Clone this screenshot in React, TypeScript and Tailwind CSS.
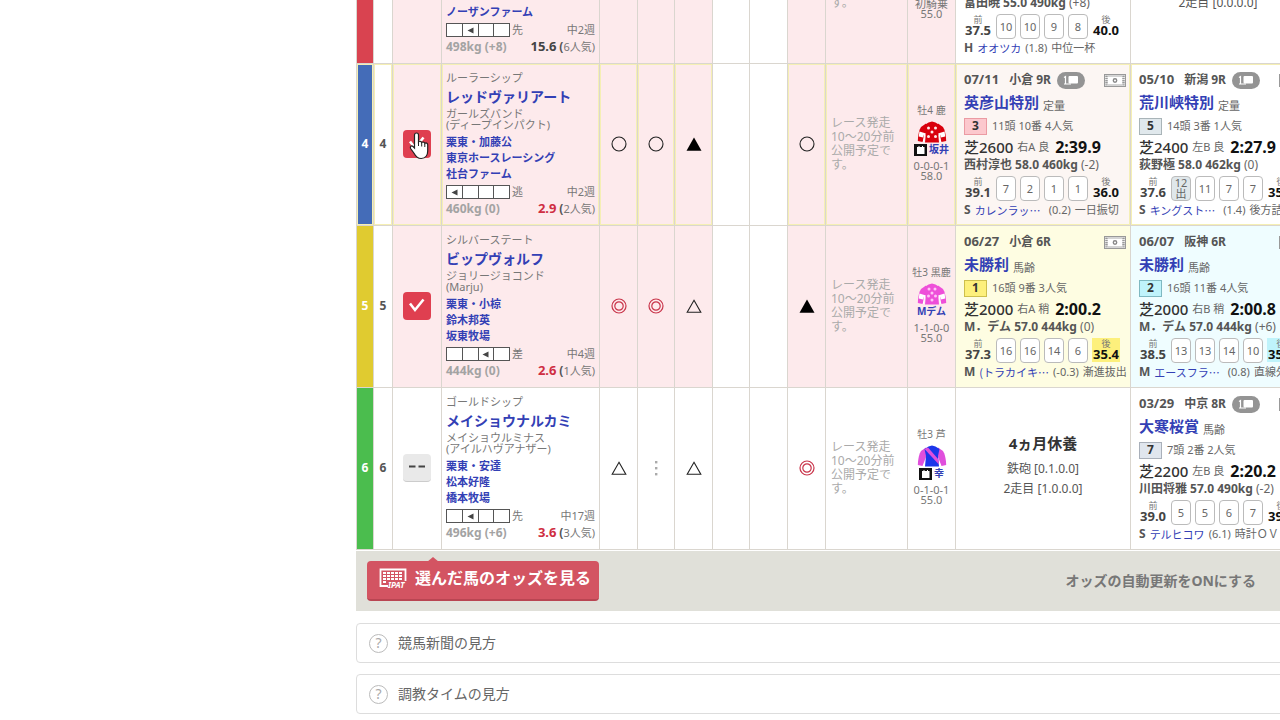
import { ReactNode, useState } from 'react';
import clsx from 'clsx';

type Mark = 'circle' | 'double' | 'solid' | 'triangle' | 'dots' | null;

interface Race {
  kind: 'race';
  bg: string;
  date?: string;
  place?: string;
  video?: boolean;
  title?: string;
  rule?: string;
  rank?: string;
  rankStyle?: string;
  field?: string;
  distance?: string;
  track?: string;
  time?: string;
  jockey: string;
  diff: string;
  front: string;
  corners: string[];
  last: string;
  lastBg?: string;
  pace: string;
  rival: string;
  margin: string;
  note: string;
}

interface Rest {
  kind: 'rest';
  title?: string;
  lines: string[];
}

interface Horse {
  no: number;
  frame: string;
  picked: boolean;
  hover?: boolean;
  sire?: string;
  name?: string;
  dam?: string;
  damSire?: string;
  people: string[];
  style: number;
  styleName: string;
  interval: string;
  weight: string;
  odds: string;
  hot?: boolean;
  rank: string;
  marks: Mark[];
  sex?: string;
  silk: 'star' | 'dots' | 'sash';
  stable?: boolean;
  rider?: string;
  record: string;
  load: string;
  races: (Race | Rest)[];
}

const horses: Horse[] = [
  {
    no: 3,
    frame: 'bg-[#d94350]',
    picked: true,
    people: ['ノーザンファーム'],
    style: 1,
    styleName: '先',
    interval: '中2週',
    weight: '498kg (+8)',
    odds: '15.6',
    rank: '6人気',
    marks: [null, null, null, null, null, null],
    silk: 'star',
    record: '初騎乗',
    load: '55.0',
    races: [
      {
        kind: 'race',
        bg: 'bg-white',
        jockey: '富田暁 55.0 490kg',
        diff: '(+8)',
        front: '37.5',
        corners: ['10', '10', '9', '8'],
        last: '40.0',
        pace: 'H',
        rival: 'オオツカ',
        margin: '(1.8)',
        note: '中位一杯',
      },
      { kind: 'rest', lines: ['', '2走目 [0.0.0.0]'] },
    ],
  },
  {
    no: 4,
    frame: 'bg-[#446cb8]',
    picked: true,
    hover: true,
    sire: 'ルーラーシップ',
    name: 'レッドヴァリアート',
    dam: 'ガールズバンド',
    damSire: '(ディープインパクト)',
    people: ['栗東・加藤公', '東京ホースレーシング', '社台ファーム'],
    style: 0,
    styleName: '逃',
    interval: '中2週',
    weight: '460kg (0)',
    odds: '2.9',
    hot: true,
    rank: '2人気',
    marks: ['circle', 'circle', 'solid', null, null, 'circle'],
    sex: '牡4 鹿',
    silk: 'star',
    stable: true,
    rider: '坂井',
    record: '0-0-0-1',
    load: '58.0',
    races: [
      {
        kind: 'race',
        bg: 'bg-[#fcf6f3]',
        date: '07/11',
        place: '小倉 9R',
        video: true,
        title: '英彦山特別',
        rule: '定量',
        rank: '3',
        rankStyle: 'bg-[#fcc8cd] border-[#eb9ba3]',
        field: '11頭 10番 4人気',
        distance: '芝2600',
        track: '右A 良',
        time: '2:39.9',
        jockey: '西村淳也 58.0 460kg',
        diff: '(-2)',
        front: '39.1',
        corners: ['7', '2', '1', '1'],
        last: '36.0',
        pace: 'S',
        rival: 'カレンラッ…',
        margin: '(0.2)',
        note: '一日振切',
      },
      {
        kind: 'race',
        bg: 'bg-white',
        date: '05/10',
        place: '新潟 9R',
        video: true,
        title: '荒川峡特別',
        rule: '定量',
        rank: '5',
        rankStyle: 'bg-[#e0e8ec] border-[#a9b4b8]',
        field: '14頭 3番 1人気',
        distance: '芝2400',
        track: '左B 良',
        time: '2:27.9',
        jockey: '荻野極 58.0 462kg',
        diff: '(0)',
        front: '37.6',
        corners: ['12出', '11', '7', '7'],
        last: '35.5',
        pace: 'S',
        rival: 'キングスト…',
        margin: '(1.4)',
        note: '後方詰',
      },
    ],
  },
  {
    no: 5,
    frame: 'bg-[#e0cb30]',
    picked: true,
    sire: 'シルバーステート',
    name: 'ビップヴォルフ',
    dam: 'ジョリージョコンド',
    damSire: '(Marju)',
    people: ['栗東・小椋', '鈴木邦英', '坂東牧場'],
    style: 2,
    styleName: '差',
    interval: '中4週',
    weight: '444kg (0)',
    odds: '2.6',
    hot: true,
    rank: '1人気',
    marks: ['double', 'double', 'triangle', null, null, 'solid'],
    sex: '牡3 黒鹿',
    silk: 'dots',
    rider: 'Mデム',
    record: '1-1-0-0',
    load: '55.0',
    races: [
      {
        kind: 'race',
        bg: 'bg-[#fefde2]',
        date: '06/27',
        place: '小倉 6R',
        title: '未勝利',
        rule: '馬齢',
        rank: '1',
        rankStyle: 'bg-[#fdf07c] border-[#cdbf4d]',
        field: '16頭 9番 3人気',
        distance: '芝2000',
        track: '右A 稍',
        time: '2:00.2',
        jockey: 'M．デム 57.0 444kg',
        diff: '(0)',
        front: '37.3',
        corners: ['16', '16', '14', '6'],
        last: '35.4',
        lastBg: 'bg-[#fdf07c]',
        pace: 'M',
        rival: '(トラカイキ…',
        margin: '(-0.3)',
        note: '漸進抜出',
      },
      {
        kind: 'race',
        bg: 'bg-[#effdff]',
        date: '06/07',
        place: '阪神 6R',
        title: '未勝利',
        rule: '馬齢',
        rank: '2',
        rankStyle: 'bg-[#bff3fb] border-[#7fb9c2]',
        field: '16頭 11番 4人気',
        distance: '芝2000',
        track: '右B 稍',
        time: '2:00.8',
        jockey: 'M．デム 57.0 444kg',
        diff: '(+6)',
        front: '38.5',
        corners: ['13', '13', '14', '10'],
        last: '35.2',
        lastBg: 'bg-[#bff3fb]',
        pace: 'M',
        rival: 'エースフラ…',
        margin: '(0.8)',
        note: '直線外',
      },
    ],
  },
  {
    no: 6,
    frame: 'bg-[#4bbd4e]',
    picked: false,
    sire: 'ゴールドシップ',
    name: 'メイショウナルカミ',
    dam: 'メイショウルミナス',
    damSire: '(アイルハヴアナザー)',
    people: ['栗東・安達', '松本好隆', '橋本牧場'],
    style: 1,
    styleName: '先',
    interval: '中17週',
    weight: '496kg (+6)',
    odds: '3.6',
    hot: true,
    rank: '3人気',
    marks: ['triangle', 'dots', 'triangle', null, null, 'double'],
    sex: '牡3 芦',
    silk: 'sash',
    stable: true,
    rider: '幸',
    record: '0-1-0-1',
    load: '55.0',
    races: [
      { kind: 'rest', title: '4ヵ月休養', lines: ['鉄砲 [0.1.0.0]', '2走目 [1.0.0.0]'] },
      {
        kind: 'race',
        bg: 'bg-white',
        date: '03/29',
        place: '中京 8R',
        video: true,
        title: '大寒桜賞',
        rule: '馬齢',
        rank: '7',
        rankStyle: 'bg-[#e0e6ee] border-[#a9b0ba]',
        field: '7頭 2番 2人気',
        distance: '芝2200',
        track: '左B 良',
        time: '2:20.2',
        jockey: '川田将雅 57.0 490kg',
        diff: '(-2)',
        front: '39.0',
        corners: ['5', '5', '6', '7'],
        last: '39.5',
        pace: 'S',
        rival: 'テルヒコワ',
        margin: '(6.1)',
        note: '時計ＯＶ',
      },
    ],
  },
];

function MarkIcon({ mark }: { mark: Mark }) {
  if (!mark) return null;
  return (
    <svg viewBox="0 0 18 18" className="mx-auto block size-[18px]" fill="none">
      {mark === 'circle' && <circle cx="9" cy="9" r="7" stroke="#222" strokeWidth="1.1" />}
      {mark === 'double' && (
        <g stroke="#c9344a" strokeWidth="1.2">
          <circle cx="9" cy="9" r="7" />
          <circle cx="9" cy="9" r="4.2" />
        </g>
      )}
      {mark === 'solid' && <path d="M9 2.5 16.5 15.7H1.5Z" fill="#000" />}
      {mark === 'triangle' && <path d="M9 3.3 15.8 15.2H2.2Z" stroke="#222" strokeWidth="1.1" />}
      {mark === 'dots' && (
        <g fill="#aaa">
          <rect x="8" y="2" width="2.4" height="2.4" />
          <rect x="8" y="8" width="2.4" height="2.4" />
          <rect x="8" y="14" width="2.4" height="2.4" />
        </g>
      )}
    </svg>
  );
}

function Silk({ type }: { type: Horse['silk'] }) {
  const body = { star: '#d9000d', dots: '#ee4fd9', sash: '#1c36ea' }[type];
  const sleeve = { star: '#d9000d', dots: '#ee4fd9', sash: '#e04fdc' }[type];
  return (
    <svg viewBox="0 0 30 22" className="mx-auto block h-[22px] w-[30px]">
      <path d="M9 2.5 4 6C2 9 1 14 .8 20L5.5 21 9 12Z" fill={sleeve} />
      <path d="m21 2.5 5 3.5c2 3 3 8 3.2 14L24.5 21 21 12Z" fill={sleeve} />
      <path d="M11.5 1.5 15 .5l3.5 1 4 2.5-1.5 7 1 10.5H8L9 11 7.5 4Z" fill={body} />
      {type !== 'sash' && (
        <>
          <path d="m2.4 10.5 5 1.5-1.3 4.5-4.3-1Zm25.2 0-5 1.5 1.3 4.5 4.3-1Z" fill="#fff" />
          <path d="m7.8 12-1.3 9M22.2 12l1.3 9" stroke="#fff" strokeWidth="1.3" />
        </>
      )}
      {type === 'star' && (
        <g fill="#ffe9e9">
          <circle cx="11.5" cy="7" r="1.5" />
          <circle cx="18.5" cy="7" r="1.5" />
          <circle cx="15" cy="11" r="1.5" />
          <circle cx="11.5" cy="15.5" r="1.5" />
          <circle cx="18.5" cy="15.5" r="1.5" />
        </g>
      )}
      {type === 'dots' && (
        <g fill="#ffc4f5">
          <circle cx="12" cy="6" r="1.5" />
          <circle cx="18" cy="6" r="1.5" />
          <circle cx="15" cy="10" r="1.5" />
          <circle cx="11.5" cy="13" r="1.5" />
          <circle cx="18.5" cy="13" r="1.5" />
          <circle cx="15" cy="17" r="1.5" />
        </g>
      )}
      {type === 'sash' && <path d="M7.5 4 11 2.5l10.5 12 .4 5Z" fill="#e04fdc" />}
    </svg>
  );
}

function StableIcon() {
  return (
    <svg viewBox="0 0 13 12" className="block h-3 w-[13px]">
      <rect width="13" height="12" fill="#111" />
      <path d="M3 3h1.5V2h1v1H8V2h1v1h1.5v7H3Z" fill="#fff" />
    </svg>
  );
}

function VideoBadge() {
  return (
    <svg viewBox="0 0 28 17" className="block h-[17px] w-7">
      <rect width="28" height="17" rx="8.5" fill="#949494" />
      <rect x="11.5" y="4" width="9.5" height="7.5" rx="1" fill="#fff" />
      <path d="M7 5.500 8.500 4.500v7.500M7 12h7" stroke="#fff" strokeWidth="1.2" fill="none" />
    </svg>
  );
}

function FilmIcon() {
  return (
    <svg viewBox="0 0 22 13" className="block h-[13px] w-[22px]" fill="none">
      <rect x=".5" y=".5" width="21" height="12" fill="#fff" stroke="#999" />
      <path d="M2.5 1.5v10M19.5 1.5v10" stroke="#999" strokeWidth="2.5" strokeDasharray="1.5 .7" />
      <path d="M4 2h14M4 11h14" stroke="#aaa" />
      <circle cx="11" cy="6.5" r="1.7" stroke="#888" strokeWidth="1.4" />
    </svg>
  );
}

function HandCursor() {
  return (
    <svg viewBox="0 0 20 28" className="pointer-events-none absolute top-0.5 left-4 z-10 h-7 w-5">
      <path
        d="M5.5 16V3a2 2 0 0 1 4 0v7a1.8 1.8 0 0 1 3.2.6 1.8 1.8 0 0 1 3.1.9 1.7 1.7 0 0 1 2.9 1.3V19c0 4-2 7.5-6.5 7.5-4 0-5.5-2-7-5L1.6 16.500c-.9-2 1-3.300 2.400-2Z"
        fill="#fff"
        stroke="#222"
        strokeWidth="1.2"
      />
      <path d="M9.5 10v4M12.7 11v3.5M15.8 12v3" stroke="#222" strokeWidth="1" />
    </svg>
  );
}

function PickButton({ horse }: { horse: Horse }) {
  const [picked, setPicked] = useState(horse.picked);
  return (
    <div className="relative flex justify-center">
      <button
        type="button"
        aria-label={`${horse.no}`}
        aria-pressed={picked}
        onClick={() => setPicked(!picked)}
        className={clsx(
          'flex size-7 items-center justify-center rounded-sm',
          picked ? 'bg-[#df3f50]' : 'border-b border-[#ccc] bg-[#e9e9e9]'
        )}
      >
        <svg viewBox="0 0 28 28" className="size-7" fill="none">
          {picked ? (
            <path d="m7 11.5 5 6.5L20.5 7.5" stroke="#fff" strokeWidth="2.6" />
          ) : (
            <path d="M6 13.5h6.5M15.5 13.5H22" stroke="#444" strokeWidth="2" />
          )}
        </svg>
      </button>
      {horse.hover && <HandCursor />}
    </div>
  );
}

function HorseInfo({ horse }: { horse: Horse }) {
  return (
    <div className="px-1 text-[11px] leading-4 whitespace-nowrap text-[#777]">
      <div>{horse.sire}</div>
      {horse.name && (
        <a href="#" className="block text-sm leading-[22px] font-bold text-[#3340b5]">
          {horse.name}
        </a>
      )}
      <div className="leading-[11px]">{horse.dam}</div>
      <div className="mb-1 leading-[11px]">{horse.damSire}</div>
      {horse.people.map((p) => (
        <a key={p} href="#" className="block font-bold text-[#3340b5]">
          {p}
        </a>
      ))}
      <div className="mt-0.5 flex items-center">
        <span className="flex h-3.5 w-16 border border-[#555] bg-white">
          {[0, 1, 2, 3].map((i) => (
            <span
              key={i}
              className={clsx('flex flex-1 items-center justify-center', i > 0 && 'border-l border-[#555]')}
            >
              {i === horse.style && (
                <svg viewBox="0 0 7 7" className="size-[7px]">
                  <path d="M6.5.5v6l-6-3Z" fill="#444" />
                </svg>
              )}
            </span>
          ))}
        </span>
        <span className="ml-0.5">{horse.styleName}</span>
        <span className="ml-auto">{horse.interval}</span>
      </div>
      <div className="flex items-center justify-between">
        <b className="text-xs leading-4 text-[#a3a3a3]">{horse.weight}</b>
        <span>
          <b className={clsx('text-[13px]', horse.hot ? 'text-[#cf2e42]' : 'text-[#444]')}>{horse.odds}</b>{' '}
          <b className="text-xs text-[#555]">(</b>
          {horse.rank})
        </span>
      </div>
    </div>
  );
}

function Time({ label, value, className }: { label: string; value: string; className?: string }) {
  return (
    <div className={clsx('flex h-6 w-7 shrink-0 flex-col items-center justify-center', className)}>
      <span className="text-[9px] leading-[9px] text-[#777]">{label}</span>
      <b className="text-[13px] leading-[13px]">{value}</b>
    </div>
  );
}

function RaceInfo({ race }: { race: Race }) {
  return (
    <div className="pr-1 pl-2 text-[11px] whitespace-nowrap text-[#666]">
      {race.title && (
        <>
          <div className="flex h-[18px] items-center font-bold text-[#555]">
            <span className="text-[13px]">{race.date}</span>
            <span className="mr-1.5 ml-2.5 text-xs">{race.place}</span>
            {race.video && <VideoBadge />}
            <span className="ml-auto">
              <FilmIcon />
            </span>
          </div>
          <div className="flex h-[26px] items-center gap-1">
            <a href="#" className="text-[15px] font-bold text-[#3340b5]">
              {race.title}
            </a>
            <span className="pt-2">{race.rule}</span>
          </div>
          <div className="flex h-[22px] items-center gap-[5px]">
            <b
              className={clsx(
                'flex h-[17px] w-[23px] items-center justify-center border text-xs text-[#333]',
                race.rankStyle
              )}
            >
              {race.rank}
            </b>
            <span>{race.field}</span>
          </div>
          <div className="flex h-5 items-center">
            <span className="text-[15px] font-medium text-[#333]">{race.distance}</span>
            <span className="mr-1.5 ml-1">{race.track}</span>
            <b className="text-base text-[#111]">{race.time}</b>
          </div>
        </>
      )}
      <div className="h-4 text-xs leading-4">
        <b className="text-[#555]">{race.jockey}</b> {race.diff}
      </div>
      <div className="mt-0.5 flex h-[26px] items-center gap-1">
        <Time label="前" value={race.front} className="text-[#444]" />
        {race.corners.map((c, i) => {
          const late = c.endsWith('出');
          return (
            <span
              key={i}
              className={clsx(
                'flex h-[25px] w-5 shrink-0 items-center justify-center rounded-sm border border-[#bbb] text-center text-[11px] leading-[11px] whitespace-normal',
                late ? 'bg-[#dfe7ea]' : 'bg-white'
              )}
            >
              {late ? (
                <span>
                  {c.slice(0, -1)}
                  <br />出
                </span>
              ) : (
                c
              )}
            </span>
          );
        })}
        <Time label="後" value={race.last} className={clsx('text-[#111]', race.lastBg)} />
      </div>
      <div className="flex h-[18px] items-center gap-1">
        <b className="text-xs text-[#555]">{race.pace}</b>
        <a
          href="#"
          className={clsx(
            "font-['Noto_Sans_CJK_JP',sans-serif] text-[#3340b5]",
            race.rival.endsWith('…') && !race.rival.startsWith('(') && 'pr-1'
          )}
        >
          {race.rival}
        </a>
        <span>{race.margin}</span>
        <span>{race.note}</span>
      </div>
    </div>
  );
}

function RestInfo({ rest }: { rest: Rest }) {
  return (
    <div className="pb-2 text-center text-xs leading-5 text-[#555]">
      <div className="mb-1 h-6 text-[15px] leading-6 font-bold text-[#333]">{rest.title}</div>
      {rest.lines.map((l, i) => (
        <div key={i} className="h-5">
          {l}
        </div>
      ))}
    </div>
  );
}

function HorseRow({ horse }: { horse: Horse }) {
  const glow = horse.hover && 'shadow-[inset_0_0_0_1px_#f5efb4]';
  const cell = 'border border-[#dad6cf] p-0';
  const tint = horse.picked ? 'bg-[#fdeaec]' : 'bg-white';

  return (
    <tr className="h-[162px]">
      <th className={clsx(cell, horse.frame, glow, 'pb-0.5 text-xs text-white')}>{horse.no}</th>
      <th className={clsx(cell, glow, 'pb-0.5 text-xs text-[#555]')}>{horse.no}</th>
      <td className={clsx(cell, tint, glow, 'pb-0.5')}>
        <PickButton horse={horse} />
      </td>
      <td className={clsx(cell, tint, glow, 'pb-2 align-bottom')}>
        <HorseInfo horse={horse} />
      </td>
      {horse.marks.map((m, i) => {
        const blank = i === 3 || i === 4;
        return (
          <td key={i} className={clsx(cell, 'pb-0.5', !blank && tint, !blank && glow)}>
            <MarkIcon mark={m} />
          </td>
        );
      })}
      <td className={clsx(cell, tint, glow, 'pb-0.5 pl-[5px] text-xs leading-[14px] whitespace-nowrap text-[#aaa]')}>
        レース発走
        <br />
        10〜20分前
        <br />
        公開予定で
        <br />
        す。
      </td>
      <td className={clsx(cell, tint, glow, 'pb-1.5 text-center text-[10px] whitespace-nowrap text-[#777]')}>
        <div className="mb-1 h-3.5 leading-[14px]">{horse.sex}</div>
        <Silk type={horse.silk} />
        <div className="mb-1 flex h-3.5 items-center justify-center gap-0.5">
          {horse.stable && <StableIcon />}
          <a href="#" className="font-bold text-[#3340b5]">
            {horse.rider}
          </a>
        </div>
        <div className="text-[11px] leading-[10px]">{horse.record}</div>
        <div className="text-[11px] leading-[10px]">{horse.load}</div>
      </td>
      {horse.races.map((r, i) =>
        r.kind === 'race' ? (
          <td key={i} className={clsx(cell, r.bg, glow, 'pb-1.5 align-bottom')}>
            <RaceInfo race={r} />
          </td>
        ) : (
          <td key={i} className={cell}>
            <RestInfo rest={r} />
          </td>
        )
      )}
    </tr>
  );
}

function HelpItem({ children }: { children: ReactNode }) {
  return (
    <button
      type="button"
      className="flex h-10 w-full items-center gap-2.5 rounded-sm border border-[#ddd] bg-white pl-3 text-sm text-[#666]"
    >
      <span className="flex size-[19px] items-center justify-center rounded-full border border-[#bbb] text-[#aaa]">
        ?
      </span>
      {children}
    </button>
  );
}

export default function App() {
  return (
    <main
      lang="ja"
      className="flex h-screen flex-col justify-end overflow-hidden bg-white pb-1.5 font-['Noto_Sans','Noto_Sans_CJK_JP',sans-serif]"
    >
      <div className="ml-[356px] w-max">
        <table className="w-[949px] table-fixed border-collapse">
          <colgroup>
            <col className="w-[17px]" />
            <col className="w-[19px]" />
            <col className="w-[49px]" />
            <col className="w-[158px]" />
            <col className="w-[38px]" />
            <col className="w-[37px]" />
            <col className="w-[38px]" />
            <col className="w-[37px]" />
            <col className="w-[38px]" />
            <col className="w-[38px]" />
            <col className="w-[82px]" />
            <col className="w-12" />
            <col className="w-[175px]" />
            <col className="w-[175px]" />
          </colgroup>
          <tbody>
            {horses.map((h) => (
              <HorseRow key={h.no} horse={h} />
            ))}
          </tbody>
        </table>

        <div className="mt-px mb-3 flex h-[60px] items-center justify-between bg-[#e0e0d9] pr-[50px] pl-[11px]">
          <button
            type="button"
            className="relative flex h-10 items-center gap-2 rounded-sm border-b-2 border-[#b94552] bg-[#d35462] pr-2 pb-1 pl-3 text-base font-bold text-white"
          >
            <svg viewBox="0 0 12 5" className="absolute -top-1 left-15 h-[5px] w-3">
              <path d="M6 0 12 5H0Z" fill="#d35462" />
            </svg>
            <svg viewBox="0 0 28 22" className="h-[22px] w-7" fill="none">
              <path d="M9 19H1.5V2.5h25V14" stroke="#fff" strokeWidth="1.8" />
              <path
                d="M4 6h20M4 9h20M4 12h20M4 15h4"
                stroke="#fff"
                strokeWidth="2"
                strokeDasharray="3 1"
              />
              <text x="9" y="21" fontSize="8" fontWeight="bold" fontStyle="italic" fill="#fff">
                IPAT
              </text>
            </svg>
            選んだ馬のオッズを見る
          </button>
          <button type="button" className="text-sm font-bold text-[#777]">
            オッズの自動更新をONにする
          </button>
        </div>

        <div className="flex flex-col gap-[11px]">
          <HelpItem>競馬新聞の見方</HelpItem>
          <HelpItem>調教タイムの見方</HelpItem>
        </div>
      </div>
    </main>
  );
}
